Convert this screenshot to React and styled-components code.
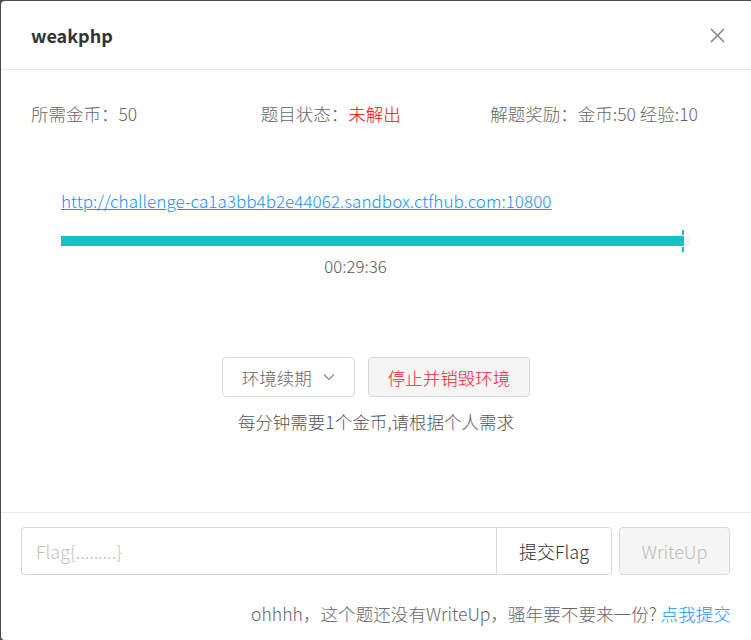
import React from "react";
import styled, { createGlobalStyle } from "styled-components";

const GlobalStyle = createGlobalStyle`
  html, body {
    margin: 0;
    padding: 0;
    background: #4d4d4d;
    overflow: hidden;
  }
  body {
    font-family: "Noto Sans CJK SC", "Noto Sans", sans-serif;
  }
`;

const App = () => {
    const progress = 98.7;

    return (
        <>
            <GlobalStyle />
            <Modal>
                <Header>
                    <Title>weakphp</Title>
                    <Close aria-label="close">
                        <svg width="15" height="15" viewBox="0 0 15 15">
                            <path d="M1 1 L14 14 M14 1 L1 14" stroke="#888" strokeWidth="1.6" fill="none" />
                        </svg>
                    </Close>
                </Header>
                <Body>
                    <InfoRow>
                        <Info>所需金币：50</Info>
                        <Info>题目状态：<Status>未解出</Status></Info>
                        <Info>解题奖励：金币:50 经验:10</Info>
                    </InfoRow>
                    <Env>
                        <EnvLink href="#">http://challenge-ca1a3bb4b2e44062.sandbox.ctfhub.com:10800</EnvLink>
                        <Track>
                            <Fill style={{ width: `${progress}%` }} />
                            <Marker style={{ left: `${progress}%` }} />
                        </Track>
                        <Timer>00:29:36</Timer>
                    </Env>
                    <Actions>
                        <Button>
                            环境续期
                            <svg width="12" height="8" viewBox="0 0 12 8">
                                <path d="M1 1.5 L6 6.5 L11 1.5" stroke="#888" strokeWidth="1.2" fill="none" />
                            </svg>
                        </Button>
                        <Button $danger>停止并销毁环境</Button>
                    </Actions>
                    <Note>每分钟需要1个金币,请根据个人需求</Note>
                </Body>
                <Footer>
                    <FlagGroup>
                        <FlagInput placeholder="Flag{.........}" />
                        <SubmitButton>提交Flag</SubmitButton>
                    </FlagGroup>
                    <WriteUpButton disabled>WriteUp</WriteUpButton>
                </Footer>
                <Hint>
                    ohhhh，这个题还没有WriteUp，骚年要不要来一份? <HintLink href="#">点我提交</HintLink>
                </Hint>
            </Modal>
        </>
    )
}

export default App

const Modal = styled.div`
    margin: 1px 0 0 1px;
    width: 752px;
    height: 639px;
    background: #fff;
    border-radius: 4px;
    box-sizing: border-box;
    overflow: hidden;
`

const Header = styled.div`
    display: flex;
    align-items: center;
    justify-content: space-between;
    height: 68px;
    padding: 0 28px 0 30px;
    border-bottom: 1px solid #e8e8e8;
`

const Title = styled.div`
    font-size: 18px;
    font-weight: 700;
    color: #333;
`

const Close = styled.div`
    display: flex;
    align-items: center;
    width: 15px;
    height: 15px;
    cursor: pointer;
`

const Body = styled.div`
    padding: 32px 30px 0 30px;
    height: 443px;
    border-bottom: 1px solid #e8e8e8;
    box-sizing: border-box;
    width: 750px;
`

const InfoRow = styled.div`
    display: grid;
    grid-template-columns: repeat(3, 1fr);
    width: 689px;
`

const Info = styled.div`
    font-size: 17.5px;
    font-weight: 300;
    line-height: 24px;
    color: #666;
    white-space: nowrap;
`

const Status = styled.span`
    color: #ff0000;
`

const Env = styled.div`
    display: flex;
    flex-direction: column;
    padding: 63px 30px 0 30px;
    width: 629px;
`

const EnvLink = styled.a`
    font-size: 17.1px;
    font-weight: 300;
    line-height: 24px;
    color: #1890ff;
    text-decoration: underline;
    align-self: flex-start;
    white-space: nowrap;
`

const Track = styled.div`
    position: relative;
    margin-top: 23px;
    height: 10px;
    background: #f5f5f5;
`

const Fill = styled.div`
    height: 100%;
    background: #13c2c2;
`

const Marker = styled.div`
    position: absolute;
    top: -6px;
    bottom: -6px;
    width: 2px;
    background: linear-gradient(#13c2c2 0 5px, transparent 5px 6px, #13c2c2 6px calc(100% - 6px), transparent calc(100% - 6px) calc(100% - 5px), #13c2c2 calc(100% - 5px));
`

const Timer = styled.div`
    margin-top: 8px;
    padding-right: 40px;
    text-align: center;
    font-size: 16.8px;
    font-weight: 300;
    line-height: 24px;
    color: #555;
`

const Actions = styled.div`
    display: flex;
    justify-content: center;
    gap: 13px;
    margin-top: 79px;
    margin-left: -30px;
    width: 750px;
`

const Button = styled.button`
    display: flex;
    align-items: center;
    justify-content: center;
    gap: 11px;
    height: 40px;
    padding: 0 19px;
    border: 1px solid #d9d9d9;
    border-radius: 4px;
    background: ${props => props.$danger ? '#f5f5f5' : '#fff'};
    color: ${props => props.$danger ? '#f5222d' : '#666'};
    font-family: inherit;
    font-size: 17.5px;
    font-weight: 300;
    cursor: pointer;
`

const Note = styled.div`
    margin-top: 13px;
    margin-left: -30px;
    width: 750px;
    text-align: center;
    font-size: 17.5px;
    font-weight: 300;
    line-height: 24px;
    color: #555;
`

const Footer = styled.div`
    display: flex;
    gap: 7px;
    padding: 14px 20px 0 20px;
    width: 750px;
    box-sizing: border-box;
`

const FlagGroup = styled.div`
    display: flex;
    width: 591px;
    height: 48px;
`

const FlagInput = styled.input`
    flex: 1;
    min-width: 0;
    height: 100%;
    box-sizing: border-box;
    padding: 0 14px;
    border: 1px solid #d9d9d9;
    border-right: none;
    border-radius: 4px 0 0 4px;
    font-family: inherit;
    font-size: 18px;
    font-weight: 300;
    outline: none;
    &::placeholder {
        color: #bfbfbf;
    }
`

const SubmitButton = styled.button`
    width: 116px;
    height: 100%;
    border: 1px solid #d9d9d9;
    border-radius: 0 4px 4px 0;
    background: #fff;
    color: #333;
    font-family: inherit;
    font-size: 18px;
    font-weight: 300;
    cursor: pointer;
`

const WriteUpButton = styled.button`
    width: 111px;
    height: 48px;
    border: 1px solid #d9d9d9;
    border-radius: 4px;
    background: #f5f5f5;
    color: #bbb;
    font-family: inherit;
    font-size: 18px;
    font-weight: 300;
`

const Hint = styled.div`
    width: 750px;
    box-sizing: border-box;
    padding: 27px 20px 0 20px;
    text-align: right;
    font-size: 17.6px;
    font-weight: 300;
    line-height: 24px;
    color: #666;
    white-space: nowrap;
`

const HintLink = styled.a`
    color: #1890ff;
    text-decoration: none;
`
